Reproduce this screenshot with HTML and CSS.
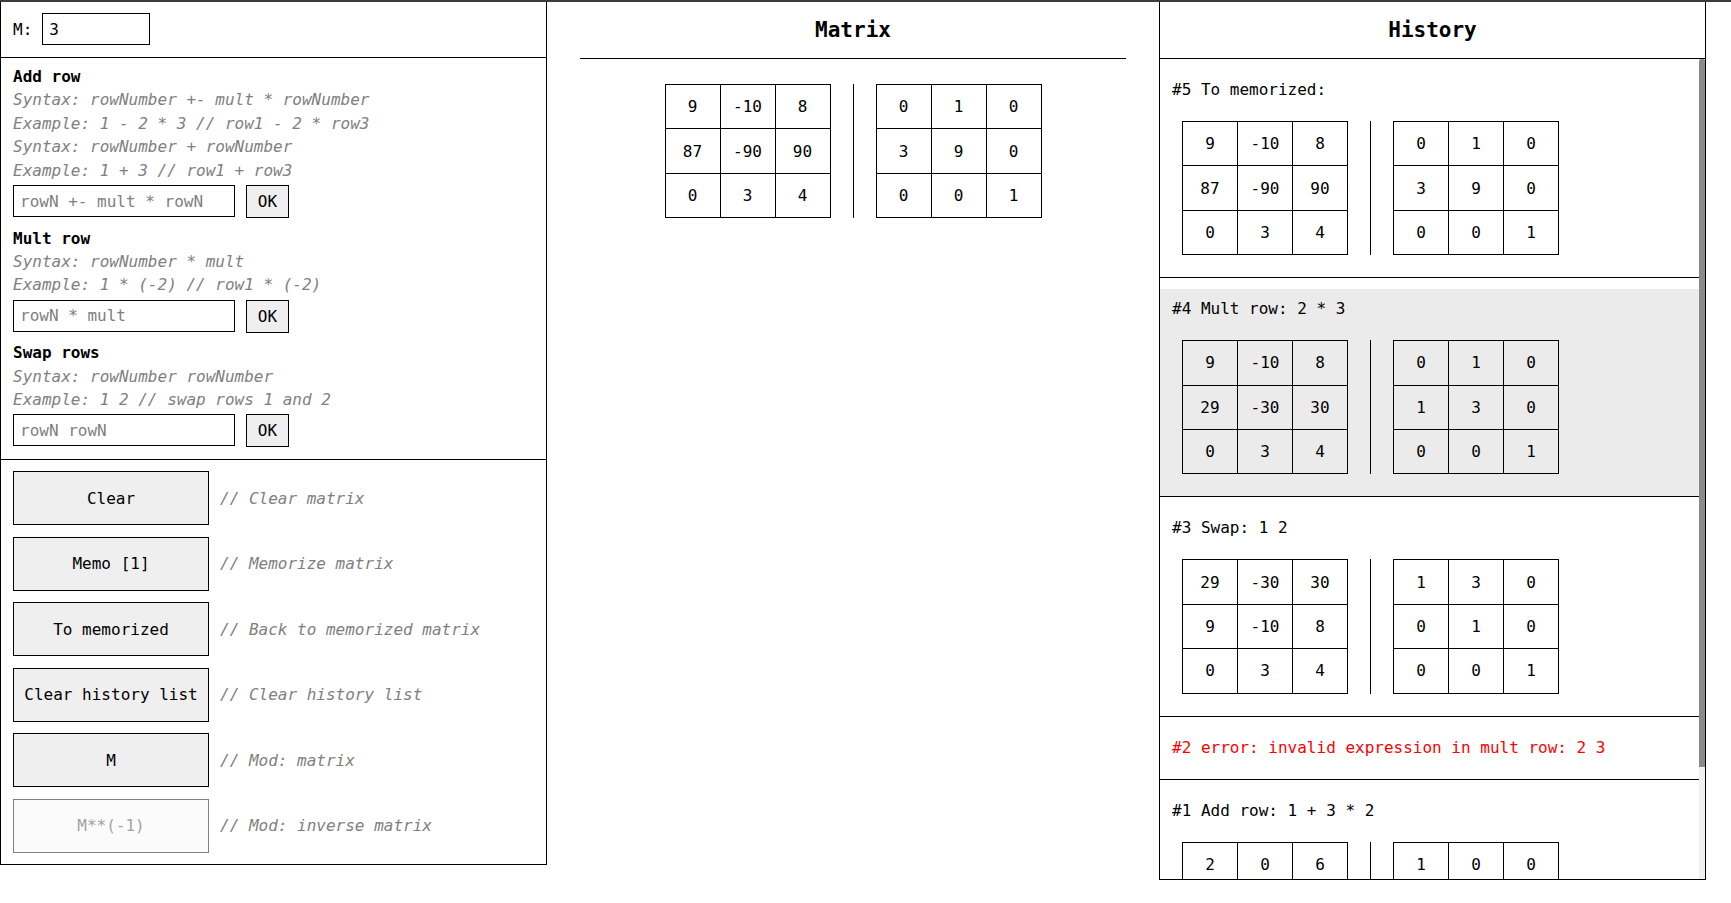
FILE: index.html
```html
<!DOCTYPE html>
<html lang="en">
<head>
<meta charset="utf-8">
<title>Matrix</title>
<link rel="stylesheet" href="styles.css">
</head>
<body>
<div class="topbar"></div>
<div class="layout">
  <section class="panel controls">
    <div class="size-row">
      <label class="size-label" for="m">M:</label>
      <input id="m" class="size-input" type="text" value="3">
    </div>
    <div class="ops">
      <div class="op">
        <div class="op-title">Add row</div>
        <div class="hint">Syntax: rowNumber +- mult * rowNumber</div>
        <div class="hint">Example: 1 - 2 * 3 // row1 - 2 * row3</div>
        <div class="hint">Syntax: rowNumber + rowNumber</div>
        <div class="hint">Example: 1 + 3 // row1 + row3</div>
        <div class="op-form">
          <input class="op-input" type="text" placeholder="rowN +- mult * rowN">
          <button class="ok">OK</button>
        </div>
      </div>
      <div class="op">
        <div class="op-title">Mult row</div>
        <div class="hint">Syntax: rowNumber * mult</div>
        <div class="hint">Example: 1 * (-2) // row1 * (-2)</div>
        <div class="op-form">
          <input class="op-input" type="text" placeholder="rowN * mult">
          <button class="ok">OK</button>
        </div>
      </div>
      <div class="op">
        <div class="op-title">Swap rows</div>
        <div class="hint">Syntax: rowNumber rowNumber</div>
        <div class="hint">Example: 1 2 // swap rows 1 and 2</div>
        <div class="op-form">
          <input class="op-input" type="text" placeholder="rowN rowN">
          <button class="ok">OK</button>
        </div>
      </div>
    </div>
    <div class="actions">
      <div class="action"><button class="btn">Clear</button><span class="comment">// Clear matrix</span></div>
      <div class="action"><button class="btn">Memo [1]</button><span class="comment">// Memorize matrix</span></div>
      <div class="action"><button class="btn">To memorized</button><span class="comment">// Back to memorized matrix</span></div>
      <div class="action"><button class="btn">Clear history list</button><span class="comment">// Clear history list</span></div>
      <div class="action"><button class="btn">M</button><span class="comment">// Mod: matrix</span></div>
      <div class="action"><button class="btn" disabled>M**(-1)</button><span class="comment">// Mod: inverse matrix</span></div>
    </div>
  </section>

  <section class="center">
    <h2 class="col-title">Matrix</h2>
    <div class="pair pair-main">
      <table class="mx"><tr><td>9</td><td>-10</td><td>8</td></tr><tr><td>87</td><td>-90</td><td>90</td></tr><tr><td>0</td><td>3</td><td>4</td></tr></table>
      <div class="sep"></div>
      <table class="mx"><tr><td>0</td><td>1</td><td>0</td></tr><tr><td>3</td><td>9</td><td>0</td></tr><tr><td>0</td><td>0</td><td>1</td></tr></table>
    </div>
  </section>

  <section class="panel history">
    <h2 class="col-title">History</h2>
    <div class="hist-body">
      <div class="hist-list">
        <div class="hist-item">
          <div class="hist-text">#5 To memorized:</div>
          <div class="pair">
            <table class="mx"><tr><td>9</td><td>-10</td><td>8</td></tr><tr><td>87</td><td>-90</td><td>90</td></tr><tr><td>0</td><td>3</td><td>4</td></tr></table>
            <div class="sep"></div>
            <table class="mx"><tr><td>0</td><td>1</td><td>0</td></tr><tr><td>3</td><td>9</td><td>0</td></tr><tr><td>0</td><td>0</td><td>1</td></tr></table>
          </div>
        </div>
        <div class="hist-item current">
          <div class="hist-text">#4 Mult row: 2 * 3</div>
          <div class="pair">
            <table class="mx"><tr><td>9</td><td>-10</td><td>8</td></tr><tr><td>29</td><td>-30</td><td>30</td></tr><tr><td>0</td><td>3</td><td>4</td></tr></table>
            <div class="sep"></div>
            <table class="mx"><tr><td>0</td><td>1</td><td>0</td></tr><tr><td>1</td><td>3</td><td>0</td></tr><tr><td>0</td><td>0</td><td>1</td></tr></table>
          </div>
        </div>
        <div class="hist-item">
          <div class="hist-text">#3 Swap: 1 2</div>
          <div class="pair">
            <table class="mx"><tr><td>29</td><td>-30</td><td>30</td></tr><tr><td>9</td><td>-10</td><td>8</td></tr><tr><td>0</td><td>3</td><td>4</td></tr></table>
            <div class="sep"></div>
            <table class="mx"><tr><td>1</td><td>3</td><td>0</td></tr><tr><td>0</td><td>1</td><td>0</td></tr><tr><td>0</td><td>0</td><td>1</td></tr></table>
          </div>
        </div>
        <div class="hist-item">
          <div class="hist-text error">#2 error: invalid expression in mult row: 2 3</div>
        </div>
        <div class="hist-item">
          <div class="hist-text">#1 Add row: 1 + 3 * 2</div>
          <div class="pair">
            <table class="mx"><tr><td>2</td><td>0</td><td>6</td></tr><tr><td>9</td><td>-10</td><td>8</td></tr><tr><td>0</td><td>3</td><td>4</td></tr></table>
            <div class="sep"></div>
            <table class="mx"><tr><td>1</td><td>0</td><td>0</td></tr><tr><td>0</td><td>1</td><td>0</td></tr><tr><td>0</td><td>0</td><td>1</td></tr></table>
          </div>
        </div>
      </div>
      <div class="scrollbar" aria-hidden="true"><div class="scroll-thumb"></div></div>
    </div>
  </section>
</div>
</body>
</html>
```

FILE: styles.css
```css
* { box-sizing: border-box; }

html, body {
  margin: 0;
  padding: 0;
  background: #fff;
}

body {
  font-family: "DejaVu Sans Mono", monospace;
  font-size: 16px;
  color: #000;
}

.topbar {
  height: 2px;
  background: #3c3c3c;
}

.layout {
  display: grid;
  grid-template-columns: 547px 546px 547px;
  column-gap: 33px;
  align-items: start;
}

.panel {
  border: 1px solid #000;
  border-top: none;
}

/* left panel */
.size-row {
  height: 56px;
  display: flex;
  align-items: center;
  gap: 10px;
  padding: 0 12px 1px;
  border-bottom: 1px solid #000;
}

.size-label { line-height: 19px; }

.size-input {
  width: 108px;
  height: 32px;
  border: 1px solid #000;
  padding: 0 6px;
  font: inherit;
  color: #000;
  background: #fff;
  outline: none;
}

.ops {
  padding: 7px 12px 3.5px;
  border-bottom: 1px solid #000;
}

.op-title {
  font-weight: bold;
  line-height: 23.4px;
}

.hint {
  font-style: italic;
  color: #808080;
  line-height: 23.4px;
  white-space: nowrap;
}

.op-form {
  display: flex;
  align-items: flex-start;
  gap: 11px;
  height: 32px;
  margin: 3px 0 9.5px;
}

.op-input {
  width: 222px;
  height: 32px;
  border: 1px solid #000;
  padding: 0 6px;
  font: inherit;
  background: #fff;
  outline: none;
}

.op-input::placeholder { color: #808080; }

.ok {
  width: 43px;
  height: 33px;
  border: 1px solid #000;
  background: #efefef;
  font: inherit;
  color: #000;
  padding: 0;
}

.actions {
  display: flex;
  flex-direction: column;
  gap: 11.5px;
  padding: 11px 12px 11px;
}

.action {
  display: flex;
  align-items: center;
  gap: 11px;
}

.btn {
  width: 196px;
  height: 54px;
  border: 1px solid #000;
  background: #efefef;
  font: inherit;
  color: #000;
  padding: 0;
}

.btn:disabled {
  background: #fbfbfb;
  border-color: #808080;
  color: #a3a3a3;
}

.comment {
  font-style: italic;
  color: #808080;
  white-space: nowrap;
}

/* column titles */
.col-title {
  margin: 0;
  height: 57px;
  display: flex;
  align-items: center;
  justify-content: center;
  font-size: 21px;
  font-weight: bold;
  border-bottom: 1px solid #000;
}

/* matrices */
.pair {
  display: flex;
  align-items: stretch;
}

.pair-main {
  justify-content: center;
  margin-top: 25px;
}

.mx {
  border-collapse: collapse;
}

.mx td {
  width: 55px;
  height: 44.4px;
  padding: 0;
  border: 1px solid #000;
  text-align: center;
  vertical-align: middle;
  line-height: 19px;
}

.sep {
  width: 1px;
  background: #000;
  margin: 0 22px;
}

/* history */
.hist-body {
  display: flex;
  height: 820px;
}

.hist-list {
  flex: 1;
  min-width: 0;
  overflow-y: auto;
  scrollbar-width: none;
}

.hist-list::-webkit-scrollbar { display: none; }

.scrollbar {
  width: 6px;
  flex: none;
  background: #f1f1f1;
}

.scroll-thumb {
  height: 708px;
  background: #8a8a8a;
  border-radius: 2px 2px 0 0;
}

.hist-item {
  margin-top: 11px;
  padding: 10px 0 22px 12px;
  border-bottom: 1px solid #000;
}

.hist-item.current { background: #ebebeb; }

.hist-text {
  line-height: 19px;
  white-space: nowrap;
}

.hist-text.error { color: #ff0000; }

.hist-item .pair {
  margin-top: 22px;
  margin-left: 10px;
}
```
